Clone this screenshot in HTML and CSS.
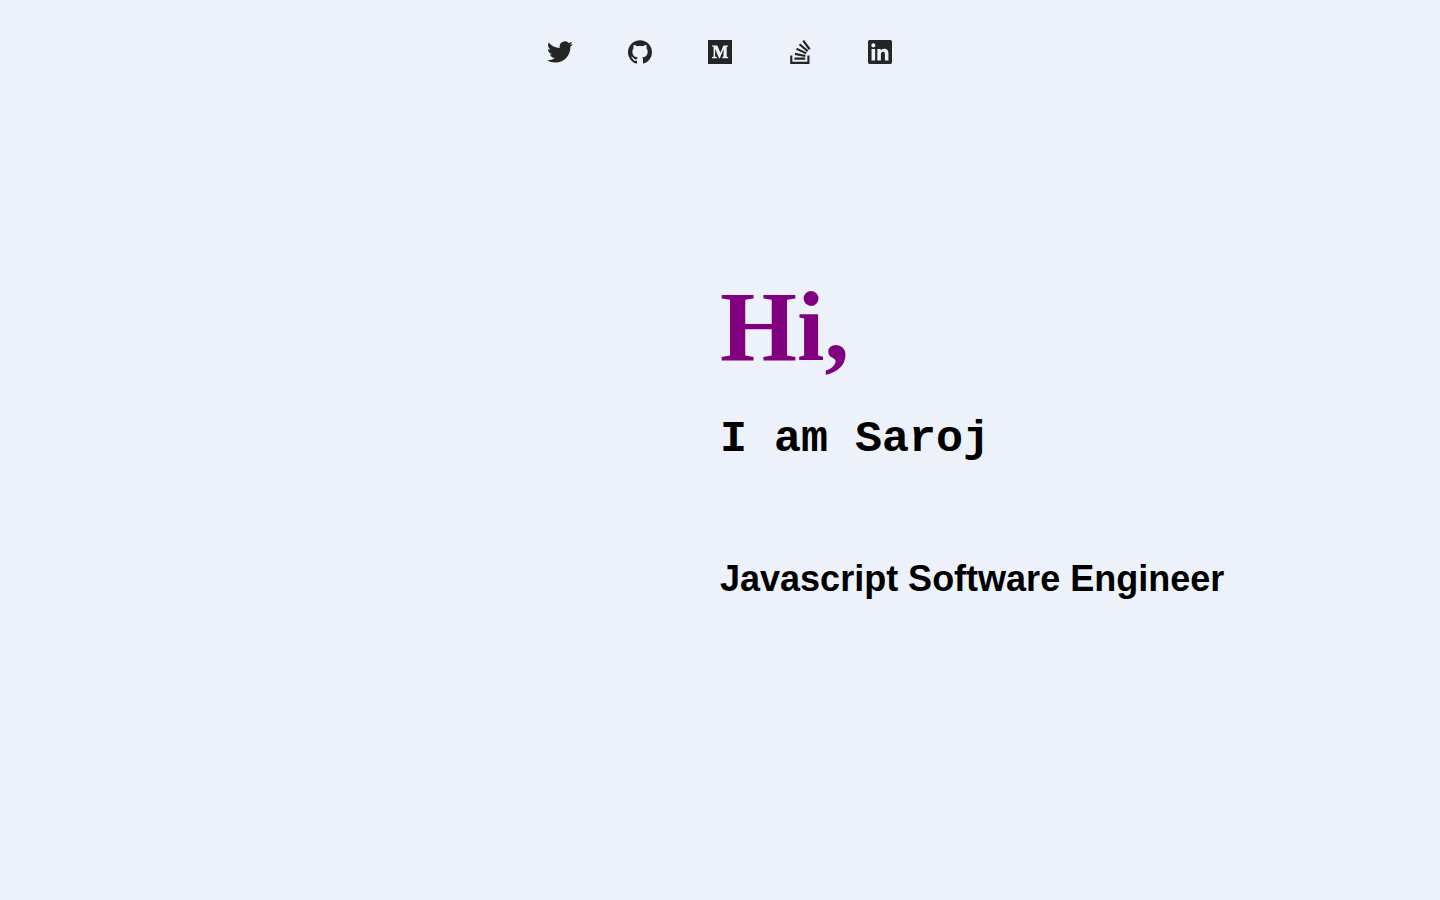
FILE: index.html
```
<!DOCTYPE html>
<html lang="en">
<head>
<meta charset="utf-8">
<title>Saroj</title>
<link rel="stylesheet" href="styles.css">
</head>
<body>
<nav class="social">
  <a class="social-link" aria-label="Twitter"><svg class="icon icon-wide" viewBox="0 0 24 24"><path d="M23.953 4.57a10 10 0 01-2.825.775 4.958 4.958 0 002.163-2.723c-.951.555-2.005.959-3.127 1.184a4.92 4.92 0 00-8.384 4.482C7.69 8.095 4.067 6.13 1.64 3.162a4.822 4.822 0 00-.666 2.475c0 1.71.87 3.213 2.188 4.096a4.904 4.904 0 01-2.228-.616v.06a4.923 4.923 0 003.946 4.827 4.996 4.996 0 01-2.212.085 4.936 4.936 0 004.604 3.417 9.867 9.867 0 01-6.102 2.105c-.39 0-.779-.023-1.17-.067a13.995 13.995 0 007.557 2.209c9.053 0 13.998-7.496 13.998-13.985 0-.21 0-.42-.015-.63A9.935 9.935 0 0024 4.59z"/></svg></a>
  <a class="social-link" aria-label="GitHub"><svg class="icon" viewBox="0 0 16 16"><path d="M8 .1C3.58.1 0 3.68 0 8.1c0 3.54 2.29 6.53 5.47 7.59.4.07.55-.17.55-.38 0-.19-.01-.82-.01-1.49-2.01.37-2.53-.49-2.69-.94-.09-.23-.48-.94-.82-1.13-.28-.15-.68-.52-.01-.53.63-.01 1.08.58 1.23.82.72 1.21 1.87.87 2.33.66.07-.52.28-.87.51-1.07-1.78-.2-3.64-.89-3.64-3.95 0-.87.31-1.59.82-2.15-.08-.2-.36-1.02.08-2.12 0 0 .67-.21 2.2.82.64-.18 1.32-.27 2-.27s1.36.09 2 .27c1.53-1.04 2.2-.82 2.2-.82.44 1.1.16 1.92.08 2.12.51.56.82 1.27.82 2.15 0 3.07-1.87 3.75-3.65 3.95.29.25.54.73.54 1.48 0 1.07-.01 1.93-.01 2.2 0 .21.15.46.55.38A8.01 8.01 0 0016 8.1c0-4.42-3.58-8-8-8z"/></svg></a>
  <a class="social-link" aria-label="Medium"><svg class="icon" viewBox="0 0 24 24"><path fill-rule="evenodd" d="M0 0h24v24H0zM4 5.4v.9l1.6.7v9.4L4 17.3v1h5v-1l-1.9-.9V8.8l3.9 9.5h.9L15.5 9v7.6l-1.3.7v1h6v-1l-1.5-.7V7l1.5-.7v-.9h-4.8l-3 7.4-3.1-7.4z"/></svg></a>
  <a class="social-link" aria-label="Stack Overflow"><svg class="icon" viewBox="-.35 0 24 24"><path d="M18.986 21.865v-6.404h2.134V24H1.844v-8.539h2.13v6.404h15.012zM6.111 19.731H16.85v-2.137H6.111v2.137zm.259-4.852l10.48 2.189.451-2.07-10.478-2.187-.453 2.068zm1.359-5.056l9.705 4.53.903-1.95-9.706-4.53-.902 1.95zm2.715-4.785l8.217 6.855 1.359-1.62-8.216-6.853-1.36 1.618zM15.751 0l-1.746 1.294 6.405 8.604 1.746-1.294L15.751 0z"/></svg></a>
  <a class="social-link" aria-label="LinkedIn"><svg class="icon" viewBox="0 0 24 24"><path d="M20.447 20.452h-3.554v-5.569c0-1.328-.027-3.037-1.852-3.037-1.853 0-2.136 1.445-2.136 2.939v5.667H9.351V9h3.414v1.561h.046c.477-.9 1.637-1.85 3.37-1.85 3.601 0 4.267 2.37 4.267 5.455v6.286zM5.337 7.433a2.062 2.062 0 01-2.063-2.065 2.064 2.064 0 112.063 2.065zm1.782 13.019H3.555V9h3.564v11.452zM22.225 0H1.771C.792 0 0 .774 0 1.729v20.542C0 23.227.792 24 1.771 24h20.451C23.2 24 24 23.227 24 22.271V1.729C24 .774 23.2 0 22.222 0h.003z"/></svg></a>
</nav>
<main class="intro">
  <h1 class="greeting">Hi,</h1>
  <h2 class="name">I am Saroj</h2>
  <h3 class="role">Javascript Software Engineer</h3>
</main>
</body>
</html>
```
FILE: styles.css
```
body {
  margin: 0;
  min-height: 100vh;
  background: #edf2fa;
  color: #000;
}

.social {
  display: flex;
  justify-content: center;
  gap: 48px;
  padding-top: 36px;
}

.social-link {
  display: flex;
  align-items: center;
  justify-content: center;
  width: 32px;
  height: 32px;
}

.icon {
  flex: none;
  width: 24px;
  height: 24px;
  fill: #252525;
}

.icon-wide {
  width: 26px;
  height: 26px;
}

.intro {
  padding: 202px 0 0 720px;
}

.greeting,
.name,
.role {
  margin: 0;
}

.greeting {
  font: bold 99px/114px "Liberation Serif", serif;
  color: #800080;
}

.name {
  margin-top: 30px;
  font: bold 45px/52px "Liberation Mono", monospace;
}

.role {
  margin-top: 92px;
  font: bold 36px/42px "Liberation Sans", sans-serif;
}
```
